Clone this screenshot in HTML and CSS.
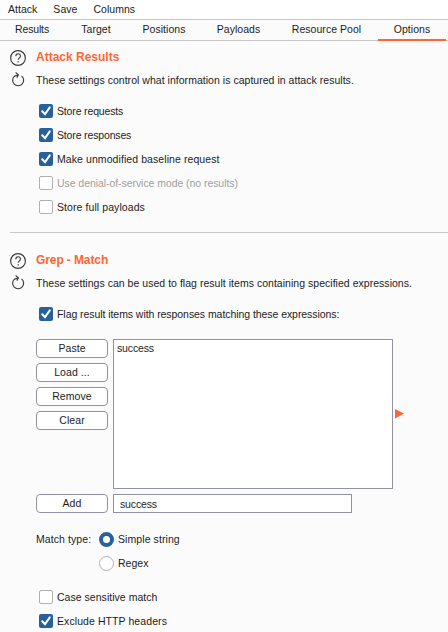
FILE: index.html
```html
<!DOCTYPE html>
<html lang="en">
<head>
<meta charset="utf-8">
<title>Attack options</title>
<link rel="stylesheet" href="styles.css">
</head>
<body>
<svg class="defs" aria-hidden="true">
  <symbol id="help" viewBox="0 0 16 18"><circle cx="8" cy="10" r="7.4"/><path d="M5.8 8.3C5.8 5 10.5 5 10.5 8C10.5 10 8.2 9.8 8.2 11.8M8.2 13.2V14.5"/></symbol>
  <symbol id="reset" viewBox="0 0 16 18"><path d="M11.5 4.9A5.5 5.5 0 1 1 4.5 5.1L8.2 4M5.6 1.5L8.4 3.8L6.8 6.6"/></symbol>
  <symbol id="check" viewBox="0 0 14 14"><path d="M3.2 7.2L6 10.2L10.8 3.4"/></symbol>
</svg>
<nav class="menu"><span>Attack</span><span>Save</span><span>Columns</span></nav>
<nav class="tabs"><span class="tight">Results</span><span>Target</span><span>Positions</span><span>Payloads</span><span class="pool">Resource Pool</span><span class="active">Options</span></nav>
<main>
  <section class="results">
    <header><svg class="icon"><use href="#help"/></svg><h2>Attack Results</h2></header>
    <div class="desc"><svg class="icon"><use href="#reset"/></svg><p>These settings control what information is captured in attack results.</p></div>
    <div class="options">
      <label><span class="box on"><svg><use href="#check"/></svg></span><span class="tight">Store requests</span></label>
      <label><span class="box on"><svg><use href="#check"/></svg></span><span class="tight">Store responses</span></label>
      <label><span class="box on"><svg><use href="#check"/></svg></span><span class="wide">Make unmodified baseline request</span></label>
      <label class="disabled"><span class="box"></span><span class="snug">Use denial-of-service mode (no results)</span></label>
      <label><span class="box"></span><span class="wide">Store full payloads</span></label>
    </div>
  </section>
  <section class="grep">
    <header><svg class="icon"><use href="#help"/></svg><h2>Grep - Match</h2></header>
    <div class="desc"><svg class="icon"><use href="#reset"/></svg><p>These settings can be used to flag result items containing specified expressions.</p></div>
    <div class="options flag"><label><span class="box on"><svg><use href="#check"/></svg></span><span class="snug">Flag result items with responses matching these expressions:</span></label></div>
    <div class="editor">
      <div class="buttons"><button>Paste</button><button>Load ...</button><button>Remove</button><button>Clear</button></div>
      <div class="list tight">success</div>
      <svg class="arrow" viewBox="0 0 9 10"><path d="M0 0L9 4.5L0 9.5Z"/></svg>
      <button>Add</button>
      <div class="field tight">success</div>
    </div>
    <div class="match">
      <span class="wide">Match type:</span>
      <div><label><span class="radio on"></span><span class="wide">Simple string</span></label><label><span class="radio"></span><span>Regex</span></label></div>
    </div>
    <div class="options last">
      <label><span class="box"></span><span>Case sensitive match</span></label>
      <label><span class="box on"><svg><use href="#check"/></svg></span><span class="wide">Exclude HTTP headers</span></label>
    </div>
  </section>
</main>
</body>
</html>
```
FILE: styles.css
```css
* { box-sizing: border-box; }
body { margin: 0; height: 632px; overflow: hidden; background: #fbfbfb; color: #1c1c1c; font: 10.5px/14px "Liberation Sans", Arial, sans-serif; letter-spacing: .03px; white-space: nowrap; }
.tight { letter-spacing: -.15px; }
.snug { letter-spacing: -.06px; }
.wide { letter-spacing: .08px; }
.defs { display: none; }
.menu { display: flex; gap: 16px; height: 20px; padding: 2px 8px 0; background: #fff; border-bottom: 1px solid #c8c8c8; }
.tabs { display: grid; grid-template-columns: 64px 64px 72px 77px 101px 68px; height: 21px; padding-top: 2px; border-bottom: 1px solid #c8c8c8; text-align: center; }
.tabs span { height: 19px; }
.tabs .pool { padding-right: 2px; }
.tabs .active { border-bottom: 2px solid #ff6633; }
.results { height: 191px; }
.results, .grep { padding-top: 8px; }
.grep { margin-left: 10px; padding-top: 19px; border-top: 1px solid #c8c8c8; }
.results { padding-left: 10px; }
header, .desc { display: flex; align-items: center; gap: 10px; height: 16px; }
.desc { height: 18px; margin-top: 6px; }
h2, p { margin: 0; }
h2 { font-size: 12px; line-height: 14px; letter-spacing: 0; color: #ff6633; }
.grep h2 { letter-spacing: -.1px; }
.icon { width: 16px; height: 18px; flex: none; fill: none; stroke: #3c3c3c; stroke-width: 1.15; }
.options { margin: 10px 0 0 29px; }
.options label { display: flex; align-items: center; gap: 4px; height: 24px; }
.box { width: 14px; height: 14px; border: 1px solid #b0b0b0; border-radius: 2px; background: #fff; }
.box.on { border: 0; background: #26619c; }
.box svg { display: block; width: 14px; height: 14px; fill: none; stroke: #fff; stroke-width: 2; stroke-linecap: round; }
.disabled { color: #a0a0a0; }
.editor { display: grid; grid-template-columns: 72px 280px 9px; column-gap: 5px; row-gap: 5px; margin: 13px 0 0 26px; }
.buttons { display: flex; flex-direction: column; gap: 5px; }
button { width: 72px; height: 19px; padding: 0 0 1px; border: 1px solid #9292a5; border-radius: 4px; background: #fff; color: inherit; font: inherit; letter-spacing: .08px; }
.list, .field { border: 1px solid #9292a5; background: #fff; }
.list { height: 150px; padding: 1px 3px; }
.arrow { width: 9px; height: 10px; align-self: center; margin-left: -3px; fill: #ff6633; }
.field { width: 239px; height: 19px; padding: 2px 6px; }
.match { display: flex; gap: 7px; margin: 14px 0 0 26px; }
.match > span { width: 56px; margin-top: 5px; }
.match label { display: flex; align-items: center; gap: 4px; height: 24px; }
.radio { width: 15px; height: 15px; border: 1px solid #b0b0b0; border-radius: 50%; background: #fff; }
.radio.on { border: 4px solid #26619c; }
.last { margin-top: 10px; }
```
